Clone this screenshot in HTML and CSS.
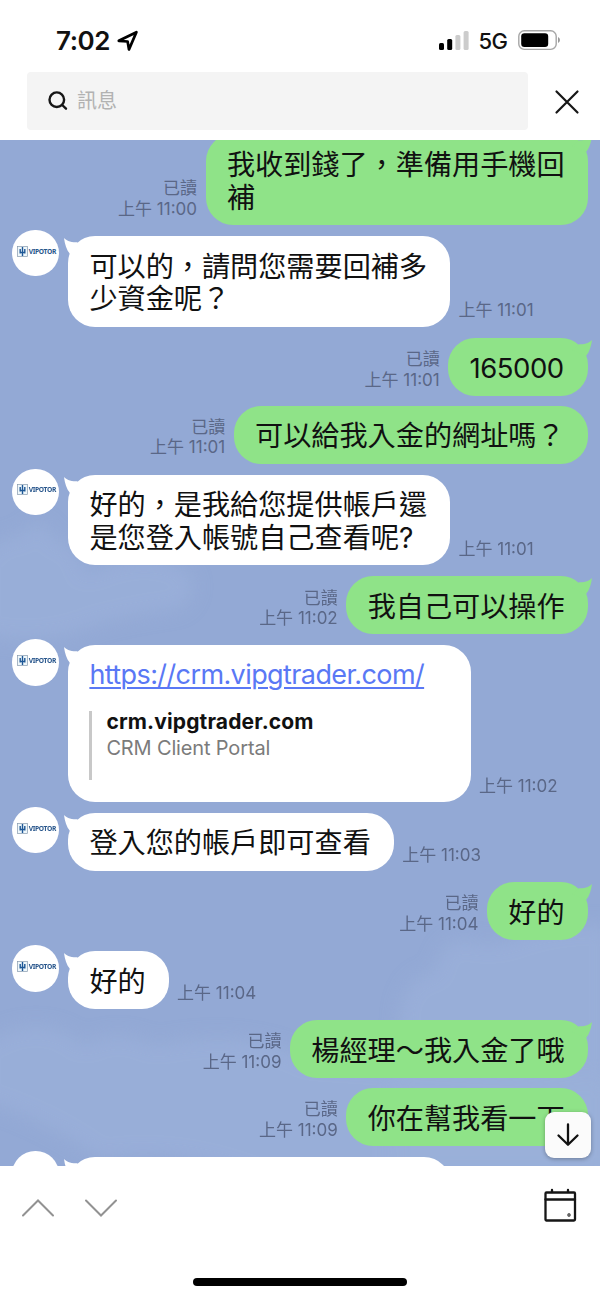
FILE: index.html
```html
<!DOCTYPE html>
<html lang="zh-Hant">
<head>
<meta charset="utf-8">
<title>訊息</title>
<link rel="stylesheet" href="styles.css">
</head>
<body>
<svg class="defs" aria-hidden="true">
  <symbol id="logo" viewBox="0 0 11 11">
    <rect x=".5" y=".5" width="10" height="10" fill="#eef7fb" stroke="#8799ad" stroke-width=".7"/>
    <path d="M5.500 1v9M3.200 3v4.500M7.800 3v4.500M3 6.500h5" fill="none" stroke="#1d5796" stroke-width="1.400"/>
  </symbol>
  <symbol id="tail" viewBox="0 0 20 16"><path d="M0 0C2 2.200 6 4.500 13 4.300L20 10L6 16C2.500 12 .8 6 0 0Z"/></symbol>
</svg>
<div class="screen">
  <header class="status">
    <span class="clock">7:02</span>
    <svg class="location" width="22" height="22" viewBox="0 0 22 22"><path d="M1.800 10.800L19.400 2.200L12 19.400L10.600 11.500Z" fill="none" stroke="#000" stroke-width="2.700" stroke-linejoin="round"/></svg>
    <svg class="signal" width="30" height="20" viewBox="0 0 30 20"><rect y="12" width="5" height="7" rx="1.500"/><rect x="8.200" y="8" width="5" height="11" rx="1.500"/><rect x="16.400" y="4" width="5" height="15" rx="1.500" fill="#ccc"/><rect x="24.600" y="0" width="5" height="19" rx="1.500" fill="#ccc"/></svg>
    <span class="network">5G</span>
    <svg class="battery" width="43" height="21" viewBox="0 0 43 21"><rect x=".8" y=".8" width="37.400" height="18.600" rx="5.500" fill="none" stroke="#a6a6a6" stroke-width="1.400"/><rect x="3.200" y="3.200" width="27" height="13.800" rx="3.200"/><path d="M40 7q2 1 2 3t-2 3z" fill="#999"/></svg>
  </header>
  <div class="searchbar">
    <div class="field">
      <svg width="20" height="20" viewBox="0 0 20 20" fill="none" stroke="#161616" stroke-width="2.400" stroke-linecap="round"><circle cx="8.800" cy="8.700" r="7.300"/><path d="M14.200 14l3.800 3.700"/></svg>
      <span>訊息</span>
    </div>
    <svg class="close" width="26" height="26" viewBox="0 0 26 26" fill="none" stroke="#161616" stroke-width="2.200" stroke-linecap="round"><path d="M2.500 2.500l21 21M23.500 2.500l-21 21"/></svg>
  </div>

  <main class="chat">
    <svg class="clouds" width="600" height="1026" viewBox="0 0 600 1026">
      <defs><filter id="soft" x="-30%" y="-30%" width="160%" height="160%"><feGaussianBlur stdDeviation="9"/></filter></defs>
      <g filter="url(#soft)">
        <path class="mist" d="M-20 418q20-25 40-22q20-28 35 3q25 5 30 35q60-28 100-5q20 20-5 40q-40 5-80 15q-60 25-120 10z"/>
        <path class="mist" d="M400 870q5-35 35-38q4-35 32-32q25 8 50-3q45-15 93-12v250h-220z"/>
        <path class="mist" d="M-20 905q60-38 105 0q30-20 70 0q90-20 155 15l310 20v100h-360q-90-35-160-20q-50-38-120-60z"/>
      </g>
    </svg>

    <div class="row out">
      <div class="meta">已讀<br>上午 11:00</div>
      <div class="bubble"><svg class="tail"><use href="#tail"/></svg>我收到錢了，準備用手機回<br>補</div>
    </div>
    <div class="row in">
      <div class="avatar"><svg><use href="#logo"/></svg>VIPOTOR</div>
      <div class="bubble"><svg class="tail"><use href="#tail"/></svg>可以的，請問您需要回補多<br>少資金呢？</div>
      <div class="meta">上午 11:01</div>
    </div>
    <div class="row out">
      <div class="meta">已讀<br>上午 11:01</div>
      <div class="bubble"><svg class="tail"><use href="#tail"/></svg><span class="digits">165000</span></div>
    </div>
    <div class="row out follow">
      <div class="meta">已讀<br>上午 11:01</div>
      <div class="bubble">可以給我入金的網址嗎？</div>
    </div>
    <div class="row in">
      <div class="avatar"><svg><use href="#logo"/></svg>VIPOTOR</div>
      <div class="bubble"><svg class="tail"><use href="#tail"/></svg>好的，是我給您提供帳戶還<br>是您登入帳號自己查看呢?</div>
      <div class="meta">上午 11:01</div>
    </div>
    <div class="row out">
      <div class="meta">已讀<br>上午 11:02</div>
      <div class="bubble"><svg class="tail"><use href="#tail"/></svg>我自己可以操作</div>
    </div>
    <div class="row in">
      <div class="avatar"><svg><use href="#logo"/></svg>VIPOTOR</div>
      <div class="bubble link-bubble"><svg class="tail"><use href="#tail"/></svg>
        <a class="url">https://crm.vipgtrader.com/</a>
        <div class="preview">
          <div class="preview-title">crm.vipgtrader.com</div>
          <div class="preview-text">CRM Client Portal</div>
        </div>
      </div>
      <div class="meta">上午 11:02</div>
    </div>
    <div class="row in">
      <div class="avatar"><svg><use href="#logo"/></svg>VIPOTOR</div>
      <div class="bubble"><svg class="tail"><use href="#tail"/></svg>登入您的帳戶即可查看</div>
      <div class="meta">上午 11:03</div>
    </div>
    <div class="row out">
      <div class="meta">已讀<br>上午 11:04</div>
      <div class="bubble"><svg class="tail"><use href="#tail"/></svg>好的</div>
    </div>
    <div class="row in">
      <div class="avatar"><svg><use href="#logo"/></svg>VIPOTOR</div>
      <div class="bubble"><svg class="tail"><use href="#tail"/></svg>好的</div>
      <div class="meta">上午 11:04</div>
    </div>
    <div class="row out">
      <div class="meta">已讀<br>上午 11:09</div>
      <div class="bubble"><svg class="tail"><use href="#tail"/></svg>楊經理～我入金了哦</div>
    </div>
    <div class="row out follow">
      <div class="meta">已讀<br>上午 11:09</div>
      <div class="bubble">你在幫我看一下</div>
    </div>
    <div class="row in">
      <div class="avatar"></div>
      <div class="bubble cut"><svg class="tail"><use href="#tail"/></svg></div>
    </div>

    <div class="jump"><svg width="24" height="26" viewBox="0 0 24 26" fill="none" stroke="#111" stroke-width="2.300" stroke-linecap="round" stroke-linejoin="round"><path d="M12 2.500v20M2.500 13.500l9.500 9.300l9.500-9.300"/></svg></div>
  </main>

  <footer class="toolbar">
    <svg class="up" width="34" height="20" viewBox="0 0 34 20"><path d="M2 17.500L17 2.500L32 17.500"/></svg>
    <svg class="down" width="34" height="20" viewBox="0 0 34 20"><path d="M2 2.500L17 17.500L32 2.500"/></svg>
    <svg class="calendar" width="34" height="34" viewBox="0 0 34 34" fill="none" stroke="#161616" stroke-width="2.300" stroke-linecap="round" stroke-linejoin="round"><rect x="2.500" y="4.500" width="29.500" height="28" rx="1"/><path d="M2.500 11.500h29.500M9 2v2M25 2v2"/><circle cx="26" cy="27" r=".5"/></svg>
  </footer>
  <div class="home"></div>
</div>
</body>
</html>
```
FILE: styles.css
```css
* { box-sizing: border-box; }
body { margin: 0; background: #fff; font-family: Inter, "Noto Sans CJK TC", sans-serif; color: #111; }
.defs { position: absolute; width: 0; height: 0; }
.screen { width: 600px; height: 1298px; overflow: hidden; display: flex; flex-direction: column; }

.status { height: 72px; flex: none; display: flex; align-items: center; padding: 9px 39.5px 0 56px; }
.clock { width: 54px; font-size: 26px; font-weight: 600; line-height: 30px; letter-spacing: -.4px; white-space: nowrap; }
.location { margin-left: 7px; }
.signal { margin-left: auto; }
.network { width: 29px; margin-left: 9.5px; font-size: 22px; font-weight: 500; line-height: 28px; letter-spacing: -.6px; }
.battery { margin-left: 10px; }

.searchbar { height: 68px; flex: none; display: flex; align-items: flex-start; padding-left: 27px; }
.field { width: 501px; height: 58px; display: flex; align-items: center; gap: 9.5px; padding-left: 20.500px; border-radius: 4px; background: #f4f4f4; }
.field span { font-size: 20px; line-height: 28px; color: #b2b2b2; }
.close { margin: 16.500px 0 0 25.500px; }

.chat { position: relative; height: 1026px; flex: none; overflow: hidden; background: #93a9d5; }
.clouds { position: absolute; top: 0; left: 0; }
.mist { fill: #9bb1da; opacity: .65; }
.row { position: relative; display: flex; margin-top: 10.9px; }
.clouds + .row { margin-top: -5.7px; }
.row.follow { margin-top: 9.7px; }
.out { justify-content: flex-end; padding-right: 12px; }
.in { padding-left: 12px; }
.avatar { width: 46.5px; height: 46.5px; flex: none; display: flex; gap: .6px; margin: -6px 9.5px 0 0; padding: 15.800px 0 0 5.200px; border-radius: 50%; background: #fff; font: 700 6.700px/11px "Noto Sans", sans-serif; letter-spacing: -.35px; color: #28568c; white-space: nowrap; }
.avatar svg { width: 11px; height: 11px; flex: none; }
.bubble { position: relative; flex: none; padding: 14.600px 23.400px 11px 21.400px; border-radius: 27px; background: #fff; font-size: 28.15px; line-height: 32.6px; white-space: nowrap; }
.out .bubble { background: #8fe388; }
.tail { position: absolute; top: 2px; left: -4px; width: 20px; height: 16px; fill: #fff; }
.out .tail { left: auto; right: -4px; transform: scaleX(-1); fill: #8fe388; }
.digits { display: block; width: 95px; font-size: 27.500px; letter-spacing: -.5px; }
.meta { align-self: flex-end; margin: 0 8.500px 5.700px; font-size: 17px; line-height: 20.6px; color: #5a6787; white-space: nowrap; }
.in .meta { margin-left: 8px; }
.out .meta { text-align: right; }

.link-bubble { width: 403px; height: 156.6px; padding-top: 14px; }
.url { display: block; color: #5a78f5; text-decoration: underline; text-decoration-thickness: 2px; text-underline-offset: 3px; font-size: 27px; letter-spacing: -.6px; }
.preview { height: 69px; margin-top: 19px; padding: 0 0 0 14px; border-left: 3px solid #c8c8c8; }
.preview-title { font-size: 21px; line-height: 22px; font-weight: 700; letter-spacing: .15px; }
.preview-text { margin-top: 1px; font-size: 20px; line-height: 28px; letter-spacing: -.15px; color: #7b7b7b; }
.cut { width: 383px; height: 58px; }

.jump { position: absolute; left: 545px; top: 972px; width: 46px; height: 46px; display: grid; place-items: center; border-radius: 9px; background: #fbfbfb; box-shadow: 0 1px 4px rgba(0,0,0,.3); }

.toolbar { height: 112px; flex: none; display: flex; padding: 0 23px 0 21px; }
.up, .down { margin-top: 32px; fill: none; stroke: #929292; stroke-width: 2; stroke-linecap: round; }
.down { margin-left: 29px; }
.calendar { margin: 22px 0 0 auto; }
.home { width: 214px; height: 8px; flex: none; margin-left: 193px; border-radius: 4px; background: #000; }
```
